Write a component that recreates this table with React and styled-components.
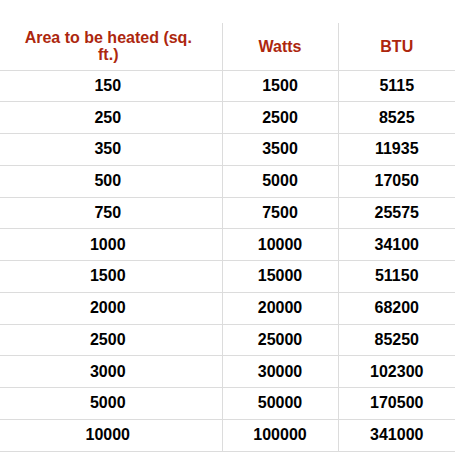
import React from "react";
import styled, { createGlobalStyle } from "styled-components";

const GlobalStyle = createGlobalStyle`
	html, body {
		margin: 0;
		padding: 0;
		background: #ffffff;
	}
	body {
		font-family: "Liberation Sans", Arial, Helvetica, sans-serif;
	}
`;

const Page = styled.div`
	padding-top: 23px;
	width: 469px;
`;

const Table = styled.table`
	width: 455px;
	border-collapse: collapse;
	table-layout: fixed;
	font-size: 16px;
	font-weight: bold;
`;

const HeadCell = styled.th`
	box-sizing: border-box;
	width: ${props => props.width}px;
	height: 47px;
	padding: ${props => (props.first ? "0 22px 0 17px" : "0 4px")};
	color: #ad270e;
	line-height: 17px;
	text-align: center;
	vertical-align: middle;
	border-bottom: 1px solid #dcdcdc;
	border-left: ${props => (props.first ? "none" : "1px solid #dcdcdc")};
`;

const Row = styled.tr`
	height: 31.75px;
`;

const Cell = styled.td`
	box-sizing: border-box;
	padding: ${props => (props.first ? "0 6px 0 0" : "0")};
	color: #000000;
	text-align: center;
	vertical-align: middle;
	border-bottom: 1px solid #dcdcdc;
	border-left: ${props => (props.first ? "none" : "1px solid #dcdcdc")};
`;

const rows = [
	[150, 1500, 5115],
	[250, 2500, 8525],
	[350, 3500, 11935],
	[500, 5000, 17050],
	[750, 7500, 25575],
	[1000, 10000, 34100],
	[1500, 15000, 51150],
	[2000, 20000, 68200],
	[2500, 25000, 85250],
	[3000, 30000, 102300],
	[5000, 50000, 170500],
	[10000, 100000, 341000],
];

export default function App() {
	return (
		<Page>
			<GlobalStyle />
			<Table>
				<thead>
					<tr>
						<HeadCell first width={222}>Area to be heated (sq. ft.)</HeadCell>
						<HeadCell width={116}>Watts</HeadCell>
						<HeadCell width={117}>BTU</HeadCell>
					</tr>
				</thead>
				<tbody>
					{rows.map(r => (
						<Row key={r[0]}>
							<Cell first>{r[0]}</Cell>
							<Cell>{r[1]}</Cell>
							<Cell>{r[2]}</Cell>
						</Row>
					))}
				</tbody>
			</Table>
		</Page>
	);
}
